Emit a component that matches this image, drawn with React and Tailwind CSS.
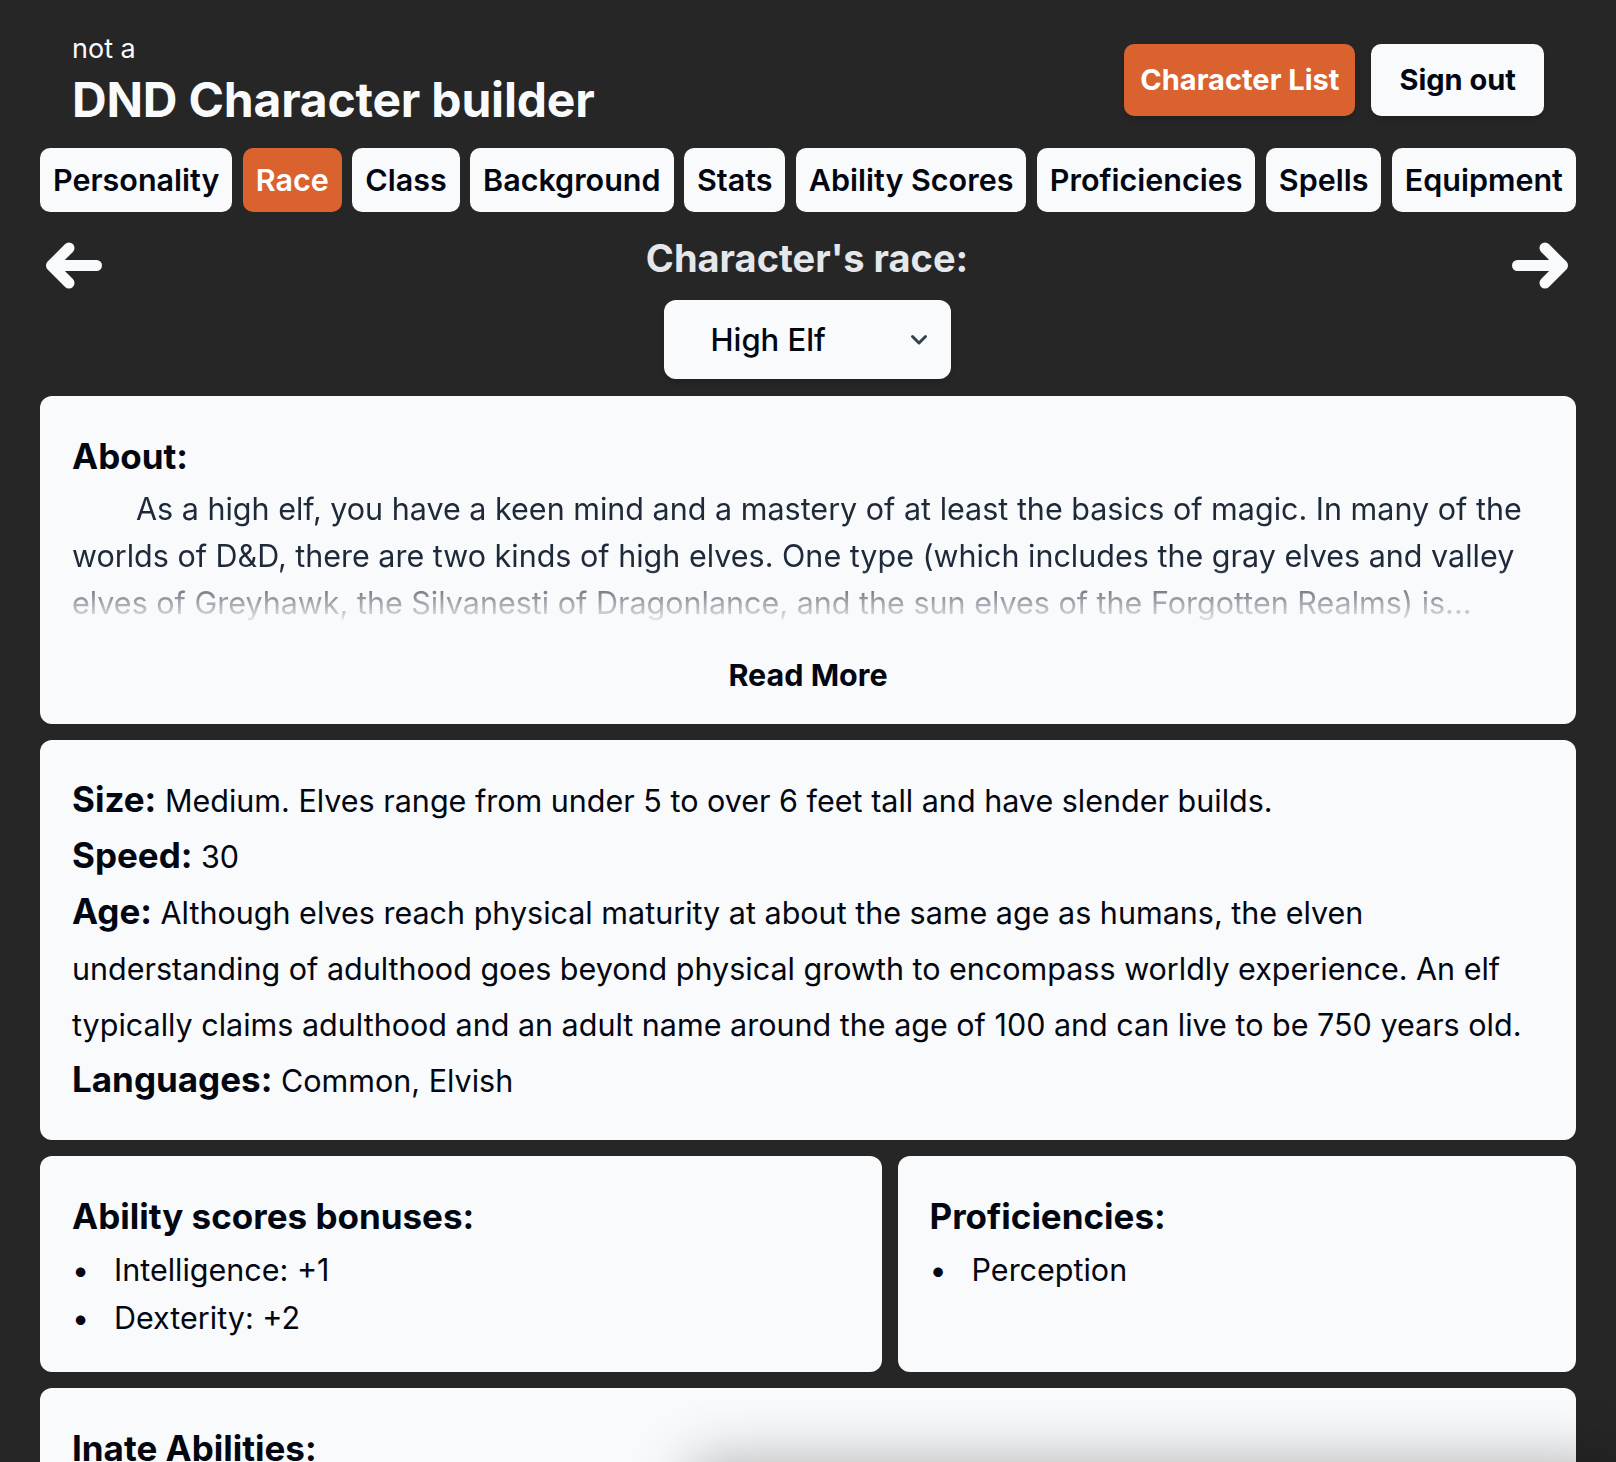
import React from "react";

const tabs = [
  "Personality",
  "Race",
  "Class",
  "Background",
  "Stats",
  "Ability Scores",
  "Proficiencies",
  "Spells",
  "Equipment",
];

function ArrowLeft() {
  return (
    <svg width="56" height="47" viewBox="0 0 56 47" fill="none" aria-hidden="true">
      <path
        d="M50.5 23.5H5.5M23 6L5.5 23.5L23 41"
        stroke="#f9fafb"
        strokeWidth="11"
        strokeLinecap="round"
        strokeLinejoin="round"
      />
    </svg>
  );
}

function ArrowRight() {
  return (
    <svg width="56" height="47" viewBox="0 0 56 47" fill="none" aria-hidden="true">
      <path
        d="M5.5 23.5H50.5M33 6L50.5 23.5L33 41"
        stroke="#f9fafb"
        strokeWidth="11"
        strokeLinecap="round"
        strokeLinejoin="round"
      />
    </svg>
  );
}

function Chevron() {
  return (
    <svg width="18" height="12" viewBox="0 0 18 12" fill="none" aria-hidden="true">
      <path
        d="M2.5 2.5L9 9L15.5 2.5"
        stroke="#374151"
        strokeWidth="3"
        strokeLinecap="round"
        strokeLinejoin="round"
      />
    </svg>
  );
}

function Bullets({ items }) {
  return (
    <ul className="mt-2.5 text-[30.5px] leading-[48px]">
      {items.map((it) => (
        <li key={it} className="flex">
          <span className="w-[42px] shrink-0">•</span>
          <span>{it}</span>
        </li>
      ))}
    </ul>
  );
}

export default function App() {
  return (
    <div className="min-h-screen bg-[#262626] font-['Inter','Noto_Sans',sans-serif] pb-10">
      <div className="mx-auto max-w-[1536px]">
        {/* Header */}
        <header className="flex items-center justify-between px-8 pt-[33px]">
          <div className="text-gray-50">
            <div className="text-[27px] leading-8">not a</div>
            <h1 className="mt-[11px] text-5xl font-bold leading-none tracking-[-0.2px]">DND Character builder</h1>
          </div>
          <div className="flex items-center gap-4 pt-[2px]">
            <button className="flex h-[72px] items-center rounded-[10px] bg-[#da622f] px-4 text-[29px] font-bold text-white shadow-md">
              Character List
            </button>
            <button className="flex h-[72px] items-center rounded-[10px] bg-gray-50 px-7 text-[29px] font-bold text-gray-950 shadow-md">
              Sign out
            </button>
          </div>
        </header>

        {/* Tabs */}
        <nav className="mt-6 flex justify-between">
          {tabs.map((t) => (
            <button
              key={t}
              className={
                t === "Race"
                  ? "rounded-[10px] bg-[#da622f] px-[13px] py-[14px] text-[30.5px] font-semibold leading-9 text-white"
                  : "rounded-[10px] bg-gray-50 px-[13px] py-[14px] text-[30.5px] font-semibold leading-9 text-gray-950"
              }
            >
              {t}
            </button>
          ))}
        </nav>

        {/* Title row */}
        <div className="mt-[23px] flex items-start justify-between pl-[6px] pr-2">
          <button className="mt-[7px]" aria-label="Previous">
            <ArrowLeft />
          </button>
          <div className="flex flex-1 flex-col items-center">
            <h2 className="text-[38px] font-bold leading-[46px] text-gray-200">Character's race:</h2>
            <div className="mt-[19px] flex h-[79px] w-[287px] items-center justify-between rounded-xl bg-gray-50 pl-[47px] pr-[23px] shadow-md">
              <span className="text-[31px] font-medium leading-9 text-gray-950">High Elf</span>
              <Chevron />
            </div>
          </div>
          <button className="mt-[7px]" aria-label="Next">
            <ArrowRight />
          </button>
        </div>

        {/* Cards */}
        <div className="mt-[17px] flex flex-col gap-4">
          {/* About */}
          <section className="rounded-xl bg-gray-50 px-8 pb-[31px] pt-10">
            <h3 className="text-[35px] font-bold leading-10 text-gray-950">About:</h3>
            <p className="mt-[9px] indent-16 text-[30.5px] leading-[47px] text-gray-800 [mask-image:linear-gradient(to_bottom,black_58%,transparent_100%)]">
              As a high elf, you have a keen mind and a mastery of at least the basics of magic. In many of the
              worlds of D&amp;D, there are two kinds of high elves. One type (which includes the gray elves and
              valley elves of Greyhawk, the Silvanesti of Dragonlance, and the sun elves of the Forgotten Realms)
              is...
            </p>
            <div className="mt-[31px] flex justify-center">
              <button className="text-[30.5px] font-bold leading-9 text-gray-950">Read More</button>
            </div>
          </section>

          {/* Traits */}
          <section className="rounded-xl bg-gray-50 px-8 pb-[31px] pt-[33px] text-[30.5px] leading-[56px] text-gray-950">
            <p>
              <span className="text-[35px] font-bold leading-none">Size:</span> Medium. Elves range from under 5 to
              over 6 feet tall and have slender builds.
            </p>
            <p>
              <span className="text-[35px] font-bold leading-none">Speed:</span> 30
            </p>
            <p>
              <span className="text-[35px] font-bold leading-none">Age:</span> Although elves reach physical maturity
              at about the same age as humans, the elven understanding of adulthood goes beyond physical growth to
              encompass worldly experience. An elf typically claims adulthood and an adult name around the age of
              100 and can live to be 750 years old.
            </p>
            <p>
              <span className="text-[35px] font-bold leading-none">Languages:</span> Common, Elvish
            </p>
          </section>

          {/* Bonuses + proficiencies */}
          <div className="grid grid-cols-[841fr_678fr] gap-4">
            <section className="rounded-xl bg-gray-50 px-8 pb-[30px] pt-10 text-gray-950">
              <h3 className="text-[35px] font-bold leading-10">Ability scores bonuses:</h3>
              <Bullets items={["Intelligence: +1", "Dexterity: +2"]} />
            </section>
            <section className="rounded-xl bg-gray-50 px-8 pb-[30px] pt-10 text-gray-950">
              <h3 className="text-[35px] font-bold leading-10">Proficiencies:</h3>
              <Bullets items={["Perception"]} />
            </section>
          </div>

          {/* Inate abilities */}
          <section className="rounded-xl bg-gray-50 px-8 pb-8 pt-10 text-gray-950">
            <h3 className="text-[35px] font-bold leading-10">Inate Abilities:</h3>
            <Bullets items={["Darkvision", "Fey Ancestry", "Trance", "Cantrip"]} />
          </section>
        </div>
      </div>

      {/* Floating panel just below the fold; its shadow overlaps the last card */}
      <div className="pointer-events-none fixed left-[690px] right-0 top-full h-[120px] rounded-t-xl bg-gray-50 shadow-[0_0_60px_rgba(0,0,0,0.3)]" />
    </div>
  );
}
